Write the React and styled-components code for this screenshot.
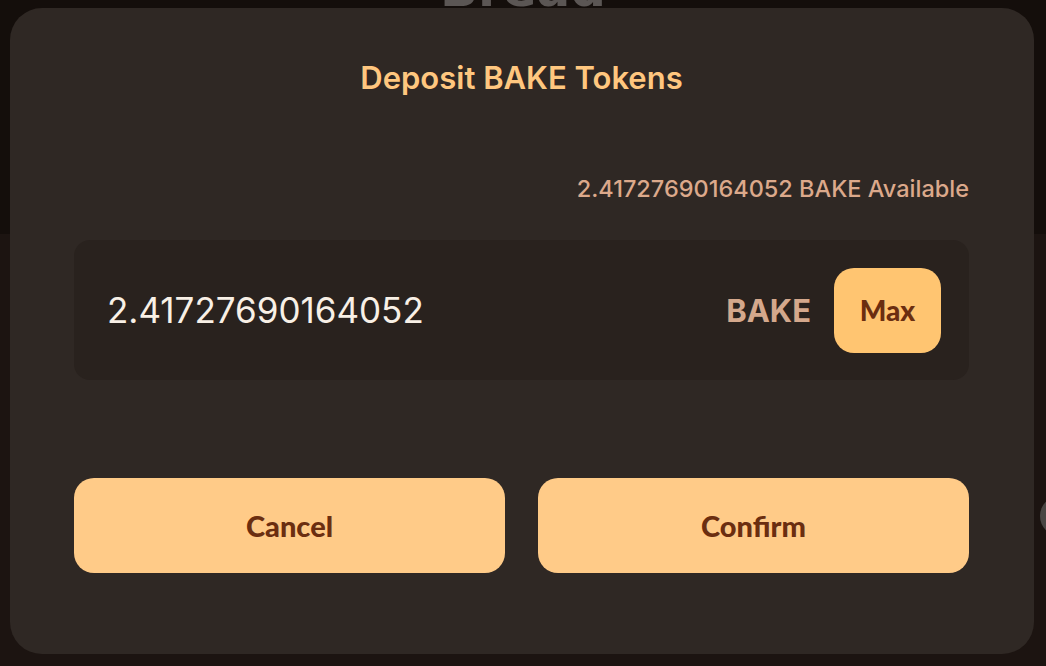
import React, { useState } from "react";
import styled, { createGlobalStyle } from "styled-components";

const GlobalStyle = createGlobalStyle`
  html, body {
    margin: 0;
    padding: 0;
    background: #1c1411;
    font-family: Inter, "Liberation Sans", sans-serif;
    overflow: hidden;
  }
`;

// amount the user holds, shown as available and prefilled by Max
const available = "2.41727690164052";

const App = () => {
  const [amount, setAmount] = useState(available);

  return (
    <>
      <GlobalStyle />
      <Page>
        <Header>
          <Brand>Bread</Brand>
        </Header>
        <Body>
          <SideDot />
        </Body>
      </Page>
      <Modal>
        <Title>Deposit BAKE Tokens</Title>
        <Available>{available} BAKE Available</Available>
        <InputBox>
          <AmountInput value={amount} onChange={(ev) => setAmount(ev.target.value)} />
          <Unit>BAKE</Unit>
          <MaxButton onClick={() => setAmount(available)}>Max</MaxButton>
        </InputBox>
        <Actions>
          <ActionButton>Cancel</ActionButton>
          <ActionButton>Confirm</ActionButton>
        </Actions>
      </Modal>
    </>
  );
};

const Page = styled.div`
  width: 100vw;
  height: 100vh;
  display: flex;
  flex-direction: column;
`;
const Header = styled.header`
  height: 234px;
  background: #140e0b;
  display: flex;
  justify-content: center;
`;
const Brand = styled.div`
  margin-top: -40px;
  font-family: "DejaVu Sans", sans-serif;
  font-weight: 900;
  font-size: 50px;
  line-height: 58px;
  color: #5b5654;
`;
const Body = styled.main`
  flex: 1;
  background: #1c1411;
  display: flex;
  justify-content: flex-end;
  align-items: flex-start;
  padding-top: 262px;
`;
const SideDot = styled.div`
  width: 40px;
  height: 40px;
  border-radius: 50%;
  background: #4a4644;
  margin-right: -34px;
`;
const Modal = styled.section`
  position: fixed;
  top: 8px;
  left: 10px;
  width: 1024px;
  height: 646px;
  box-sizing: border-box;
  padding: 50px 65px 0 64px;
  background: #2f2824;
  border-radius: 32px;
  display: flex;
  flex-direction: column;
`;
const Title = styled.h2`
  margin: 0;
  text-align: center;
  font-size: 31px;
  line-height: 40px;
  font-weight: 600;
  color: #ffc77f;
`;
const Available = styled.div`
  margin-top: 77px;
  text-align: right;
  font-size: 23.5px;
  line-height: 28px;
  font-weight: 500;
  color: #dca98b;
`;
const InputBox = styled.div`
  margin-top: 37px;
  height: 140px;
  box-sizing: border-box;
  padding: 0 28px 0 33px;
  background: #29221e;
  border-radius: 16px;
  display: flex;
  align-items: center;
  gap: 23px;
`;
const AmountInput = styled.input`
  flex: 1;
  min-width: 0;
  background: transparent;
  border: none;
  outline: none;
  padding: 0;
  font-family: Inter, "Liberation Sans", sans-serif;
  font-size: 35px;
  font-weight: 400;
  color: #f8f0e6;
`;
const Unit = styled.span`
  font-size: 31px;
  font-weight: 700;
  color: #d4a88c;
`;
const MaxButton = styled.button`
  width: 107px;
  height: 85px;
  border: none;
  border-radius: 20px;
  background: #ffc571;
  color: #6b2e10;
  font-family: Lato, "Noto Sans", sans-serif;
  font-weight: 900;
  font-size: 28px;
  cursor: pointer;
`;
const Actions = styled.div`
  margin-top: 98px;
  display: grid;
  grid-template-columns: 1fr 1fr;
  gap: 33px;
`;
const ActionButton = styled.button`
  height: 95px;
  border: none;
  border-radius: 20px;
  background: #ffcb88;
  color: #6b2e10;
  font-family: Lato, "Noto Sans", sans-serif;
  font-weight: 900;
  font-size: 29px;
  cursor: pointer;
`;

export default App;
